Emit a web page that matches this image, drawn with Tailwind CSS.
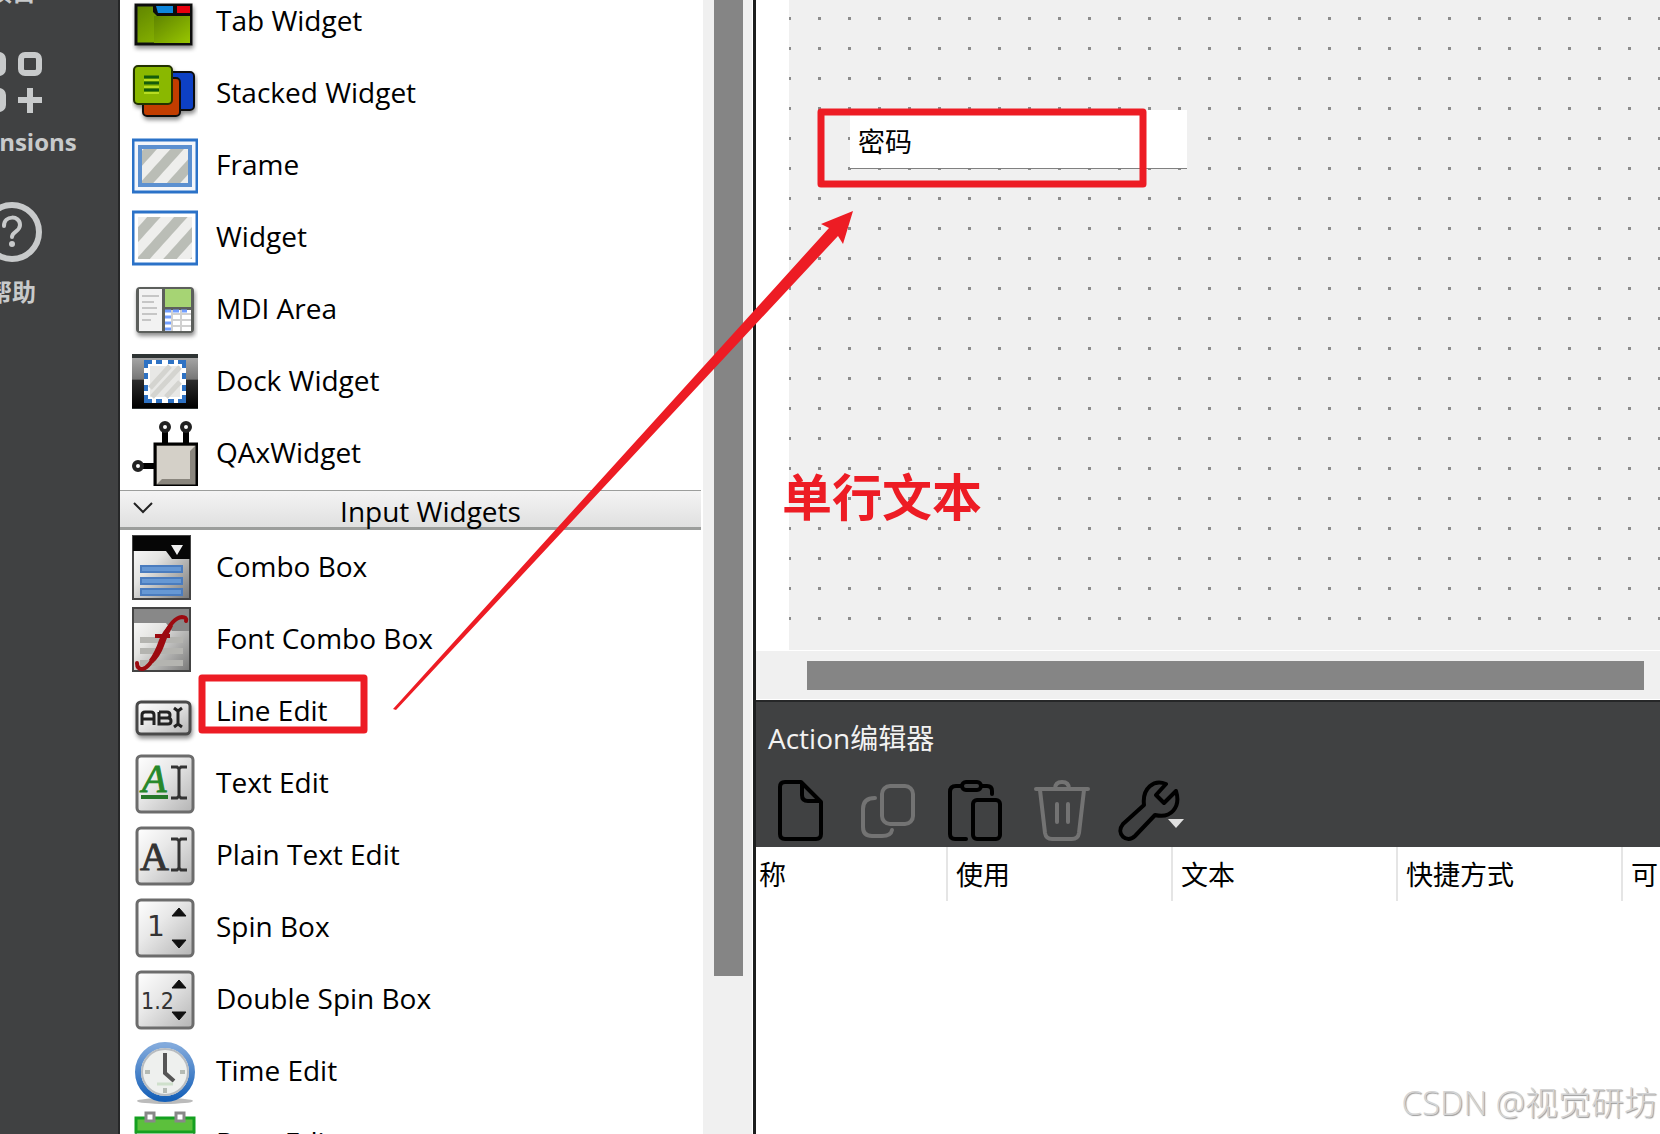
<!DOCTYPE html>
<html lang="zh-CN">
<head>
    <meta charset="UTF-8">
    <meta name="viewport" content="width=device-width, initial-scale=1.0">
    <title>Qt Designer - Line Edit</title>
    <script src="https://cdn.jsdelivr.net/npm/@tailwindcss/browser@4"></script>
</head>
<body class="relative flex h-screen overflow-hidden bg-white font-['Open_Sans','Noto_Sans_CJK_SC',sans-serif] text-[27px] text-black">

    <!-- Shared gradients and patterns for the icons -->
    <svg class="absolute size-0" aria-hidden="true">
        <defs>
            <linearGradient id="key" x1="0" y1="0" x2="1" y2="1"><stop offset="0" stop-color="#fff"/><stop offset="0.4" stop-color="#e9e9e9"/><stop offset="1" stop-color="#b4b4b4"/></linearGradient>
            <linearGradient id="green" x1="0" y1="0" x2="1" y2="1"><stop offset="0" stop-color="#5f8400"/><stop offset="1" stop-color="#98c600"/></linearGradient>
            <linearGradient id="dock" x1="0" y1="0" x2="0" y2="1"><stop offset="0" stop-color="#a5a5a5"/><stop offset="0.42" stop-color="#777"/><stop offset="0.45" stop-color="#2b2b2b"/><stop offset="1" stop-color="#000"/></linearGradient>
            <linearGradient id="grey" x1="0" y1="0" x2="1" y2="1"><stop offset="0" stop-color="#fff"/><stop offset="0.4" stop-color="#e4e4e2"/><stop offset="1" stop-color="#777"/></linearGradient>
            <linearGradient id="ring" x1="0" y1="0" x2="0" y2="1"><stop offset="0" stop-color="#82aadc"/><stop offset="1" stop-color="#1660b8"/></linearGradient>
            <pattern id="stripes" width="20" height="20" patternUnits="userSpaceOnUse" patternTransform="rotate(42)"><rect width="20" height="20" fill="#eeeeec"/><rect width="10" height="20" fill="#babdb6"/></pattern>
            <filter id="soft" x="-20%" y="-20%" width="150%" height="150%"><feDropShadow dx="1" dy="3" stdDeviation="2" flood-opacity="0.45"/></filter>
        </defs>
    </svg>

    <!-- Mode bar -->
    <nav class="w-30 shrink-0 overflow-hidden border-r-2 border-[#262728] bg-[#404142] font-bold text-[#c8cacb]">
        <div class="-ml-[88px] flex w-[200px] flex-col items-center text-[24px] leading-8">
            <a href="#" class="-mt-[24px]">项目</a>
            <a href="#" class="mt-10 flex flex-col items-center">
                <svg class="h-[70px] w-[72px]" viewBox="0 0 72 70" fill="none" stroke="#c8cacb" stroke-width="6">
                    <rect x="9" y="7" width="18" height="18" rx="4"/>
                    <rect x="45" y="7" width="18" height="18" rx="4"/>
                    <rect x="9" y="43" width="18" height="18" rx="4"/>
                    <path d="M54 40v25M42 52h24"/>
                </svg>
                <span class="mt-2">Extensions</span>
            </a>
            <a href="#" class="mt-[42px] flex flex-col items-center">
                <svg class="size-16" viewBox="0 0 64 64" fill="none" stroke="#c8cacb">
                    <circle cx="32" cy="32" r="27" stroke-width="6"/>
                    <path d="M24 26c0-11 16-11 16-1 0 7-8 6-8 12" stroke-width="4" stroke-linecap="round"/>
                    <circle cx="32" cy="44" r="3" fill="#c8cacb" stroke="none"/>
                </svg>
                <span class="mt-3">帮助</span>
            </a>
        </div>
    </nav>

    <!-- Widget box -->
    <aside class="flex w-[636px] shrink-0 overflow-hidden border-r-3 border-[#1c1e1e] text-[28px]">
        <div class="min-w-0 flex-1">
            <ul class="-mt-4 [&_svg]:mt-0.5">
                <li class="flex h-18 items-center gap-[18px] pl-3">
                    <svg class="size-[66px]" viewBox="0 0 66 66"><g filter="url(#soft)"><rect x="4" y="17" width="55" height="39" fill="url(#green)" stroke="#111" stroke-width="3"/><path d="M21 16h39v12H25l-4-4z" fill="#111"/><path d="M22 28h36v27H22z" fill="url(#green)"/><path d="M24 18h17v7H26z" fill="#0e86dc"/><path d="M45 18h13v7H45z" fill="#e8050c"/></g></svg>
                    Tab Widget
                </li>
                <li class="flex h-18 items-center gap-[18px] pl-3">
                    <svg class="size-[66px]" viewBox="0 0 66 66" stroke-width="2"><g filter="url(#soft)"><rect x="26" y="12" width="36" height="38" rx="4" fill="#0b3fc4" stroke="#111"/><rect x="11" y="18" width="37" height="38" rx="4" fill="#c23c06" stroke="#111"/><rect x="2" y="6" width="38" height="38" rx="4" fill="#8ab800" stroke="#243300"/></g><path d="M12 17h15M12 23h15M12 30h15" stroke="#145c0c" stroke-width="3"/><path d="M12 20h15M12 27h15M12 33h15" stroke="#b8dc20"/></svg>
                    Stacked Widget
                </li>
                <li class="flex h-18 items-center gap-[18px] pl-3">
                    <svg class="size-[66px]" viewBox="0 0 66 66"><rect x="1" y="8" width="64" height="52" fill="#f4f6fa" stroke="#2b72c8" stroke-width="3"/><rect x="8" y="15" width="50" height="38" fill="url(#stripes)" stroke="#5c90d0" stroke-width="4"/></svg>
                    Frame
                </li>
                <li class="flex h-18 items-center gap-[18px] pl-3">
                    <svg class="size-[66px]" viewBox="0 0 66 66"><rect x="1" y="8" width="64" height="52" fill="#fff" stroke="#2b72c8" stroke-width="3"/><rect x="6" y="13" width="54" height="42" fill="url(#stripes)"/></svg>
                    Widget
                </li>
                <li class="flex h-18 items-center gap-[18px] pl-3">
                    <svg class="size-[66px]" viewBox="0 0 66 66"><g filter="url(#soft)"><rect x="4" y="11" width="58" height="46" rx="4" fill="#5c5e5c"/></g><rect x="7" y="13" width="23" height="42" fill="#f2f2f2"/><path d="M10 20h17M10 26h12M10 32h15M10 38h15M10 44h9" stroke="#c6c6c6" stroke-width="2"/><rect x="33" y="13" width="26" height="18" fill="#a6d474"/><rect x="33" y="34" width="26" height="21" fill="#fff"/><path d="M33 35h6m2 0h6m2 0h6M33 41h6m-6 6h6m-6 6h6" stroke="#729fff" stroke-width="3"/><path d="M40 34v21M49 34v21M40 38h19M40 44h19M40 50h19" stroke="#d0d0d0" stroke-width="2"/></svg>
                    MDI Area
                </li>
                <li class="flex h-18 items-center gap-[18px] pl-3">
                    <svg class="size-[66px]" viewBox="0 0 66 66"><rect y="6" width="66" height="55" fill="#2e3434"/><rect y="10" width="66" height="50" fill="url(#dock)"/><rect x="12" y="12" width="42" height="43" rx="3" fill="#fff"/><rect x="18" y="18" width="30" height="31" fill="#e8e8e6"/><path d="M18 40l20-22M20 49l28-30M34 49l14-15" stroke="#d4d4d0" stroke-width="5"/><path d="M14 20v-6h6M46 14h6v6M52 47v6h-6M20 53h-6v-6M24 14h6M36 14h6M24 53h6M36 53h6M14 25v6M14 37v6M52 25v6M52 37v6" fill="none" stroke="#2e72c4" stroke-width="4"/></svg>
                    Dock Widget
                </li>
                <li class="flex h-18 items-center gap-[18px] pl-3">
                    <svg class="size-[66px]" viewBox="0 0 66 66"><path d="M33 11v13M54 11v13M10 46h12" stroke="#000" stroke-width="6"/><rect x="23" y="24" width="42" height="42" fill="#8a867e" stroke="#000" stroke-width="3"/><path d="M25 26h38l-5 5v28H30l-5 5z" fill="#d4d0c8"/><g fill="#fff" stroke="#222" stroke-width="4"><circle cx="33" cy="7" r="4"/><circle cx="54" cy="7" r="4"/><circle cx="6" cy="46" r="4"/></g></svg>
                    QAxWidget
                </li>
            </ul>

            <button type="button" class="mt-0.5 flex h-10 w-[581px] items-center border-t border-b-3 border-[#9c9e9c] bg-linear-to-b from-[#f4f4f4] to-[#e0e0e0] pl-3">
                <svg class="h-6 w-6" viewBox="0 0 24 24" fill="none" stroke="#222" stroke-width="2"><path d="M2 6l9 9 9-9"/></svg>
                <span class="flex-1 pt-1 pl-1 text-center">Input Widgets</span>
            </button>

            <ul class="[&_svg]:mt-0.5">
                <li class="flex h-18 items-center gap-[18px] pl-3">
                    <svg class="size-[66px]" viewBox="0 0 66 66"><rect x="1" y="2" width="57" height="63" fill="url(#grey)" stroke="#444" stroke-width="2"/><path d="M1 2h57v23H40l-6-8H1z" fill="#060606"/><path d="M39 11h12l-6 10z" fill="#eee"/><path d="M8 35h43M8 47h43M8 58h43" stroke="#4a7cbe" stroke-width="8"/><path d="M10 35h39M10 47h39M10 58h39" stroke="#6698d4" stroke-width="4"/></svg>
                    Combo Box
                </li>
                <li class="flex h-18 items-center gap-[18px] pl-3">
                    <svg class="size-[66px]" viewBox="0 0 66 66"><rect x="1" y="2" width="57" height="63" fill="url(#grey)" stroke="#444" stroke-width="2"/><path d="M2 3h55v22H40l-6-8H2z" fill="#888"/><path d="M8 34h43M8 45h43M8 57h43" stroke="#b4b4b0" stroke-width="6"/><path d="M5 57q0 6 5 6 6 0 14-15l8-17q8-19 18-20 5 0 4 4" fill="none" stroke="#9c0a10" stroke-width="4" stroke-linecap="round"/><path d="M17 54q6-8 10-20 4-10 11-16l3 2q-6 10-9 20-4 11-11 17z" fill="#9c0a10"/><path d="M23 30h15" stroke="#9c0a10" stroke-width="4"/></svg>
                    Font Combo Box
                </li>
                <li class="flex h-18 items-center gap-[18px] pl-3">
                    <svg class="size-[66px]" viewBox="0 0 66 66"><rect x="5" y="24" width="53" height="32" rx="4" fill="url(#key)" stroke="#484848" stroke-width="3" filter="url(#soft)"/><path d="M10 47V37q0-3 3-3h6q3 0 3 3v10M10 41h12M27 34v12h9q3 0 3-3t-3-3h-9m8 0q3 0 3-3t-3-3h-8" fill="none" stroke="#222" stroke-width="3"/><path d="M42 30l4 3 4-3M46 32v15M42 49l4-3 4 3" fill="none" stroke="#222" stroke-width="3"/></svg>
                    Line Edit
                </li>
                <li class="flex h-18 items-center gap-[18px] pl-3">
                    <svg class="size-[66px]" viewBox="0 0 66 66"><rect x="5" y="6" width="56" height="56" rx="4" fill="url(#key)" stroke="#6c6c6c" stroke-width="3"/><text x="10" y="42" font-family="Liberation Serif" font-style="italic" font-size="40" fill="#26882a" stroke="#26882a">A</text><path d="M9 47h27" stroke="#26782a" stroke-width="4"/><path d="M39 17h6l2 2 2-2h6M47 18v28M39 48h6l2-2 2 2h6" fill="none" stroke="#333" stroke-width="3"/></svg>
                    Text Edit
                </li>
                <li class="flex h-18 items-center gap-[18px] pl-3">
                    <svg class="size-[66px]" viewBox="0 0 66 66"><rect x="5" y="6" width="56" height="56" rx="4" fill="url(#key)" stroke="#6c6c6c" stroke-width="3"/><text x="8" y="48" font-family="Liberation Serif" font-size="40" fill="#333" stroke="#333">A</text><path d="M39 17h6l2 2 2-2h6M47 18v28M39 48h6l2-2 2 2h6" fill="none" stroke="#333" stroke-width="3"/></svg>
                    Plain Text Edit
                </li>
                <li class="flex h-18 items-center gap-[18px] pl-3">
                    <svg class="size-[66px]" viewBox="0 0 66 66"><rect x="5" y="6" width="56" height="56" rx="4" fill="url(#key)" stroke="#6c6c6c" stroke-width="3"/><text x="15" y="42" font-family="DejaVu Sans" font-size="28" fill="#333">1</text><path d="M40 22l7-8 7 8zM40 46l7 8 7-8z" fill="#111" stroke="#111"/></svg>
                    Spin Box
                </li>
                <li class="flex h-18 items-center gap-[18px] pl-3">
                    <svg class="size-[66px]" viewBox="0 0 66 66"><rect x="5" y="6" width="56" height="56" rx="4" fill="url(#key)" stroke="#6c6c6c" stroke-width="3"/><text x="9" y="43" font-family="DejaVu Sans Condensed, DejaVu Sans" font-size="23" fill="#333">1.2</text><path d="M40 22l7-8 7 8zM40 46l7 8 7-8z" fill="#111" stroke="#111"/></svg>
                    Double Spin Box
                </li>
                <li class="flex h-18 items-center gap-[18px] pl-3">
                    <svg class="size-[66px]" viewBox="0 0 66 66"><ellipse cx="33" cy="63" rx="28" ry="3" fill="#bbb"/><circle cx="33" cy="34" r="27" fill="#eef0ee" stroke="url(#ring)" stroke-width="6"/><circle cx="33" cy="34" r="23" fill="none" stroke="#b8bcc0" stroke-width="2"/><path d="M33 15v20l9 8" fill="none" stroke="#555" stroke-width="4"/><path d="M13 34h5M48 34h5M33 50v5" stroke="#b4bab4" stroke-width="4"/><path d="M25 46h16" stroke="#cfe0cc" stroke-width="3"/></svg>
                    Time Edit
                </li>
                <li class="flex h-18 items-center gap-[18px] pl-3">
                    <svg class="size-[66px]" viewBox="0 0 66 66"><rect x="4" y="8" width="58" height="54" fill="#fff" stroke="#888" stroke-width="2"/><rect x="4" y="8" width="58" height="14" fill="#5cc03c" stroke="#15a020" stroke-width="3"/><g fill="#fff" stroke="#888" stroke-width="3"><rect x="14" y="3" width="8" height="8"/><rect x="44" y="3" width="8" height="8"/></g></svg>
                    Date Edit
                </li>
            </ul>
        </div>
        <div class="w-[50px] shrink-0 border-r border-white bg-[#f0f0f0] pl-[11px]">
            <div class="h-[976px] w-[29px] bg-[#858585]"></div>
        </div>
    </aside>

    <main class="flex min-w-0 flex-1 flex-col">
        <!-- Form canvas -->
        <section class="relative ml-[33px] min-h-0 flex-1 bg-[#f0f0f0]">
            <svg class="absolute top-0 left-0 h-[calc(100%-4px)] w-full" aria-hidden="true">
                <defs><pattern id="grid" x="-1" y="17" width="30" height="30" patternUnits="userSpaceOnUse"><rect width="3" height="3" fill="#8c8c8c"/></pattern></defs>
                <rect width="100%" height="100%" fill="url(#grid)"/>
            </svg>
            <input type="text" value="密码" aria-label="密码" class="absolute top-[110px] left-[61px] h-[59px] w-[337px] border-b border-[#808080] bg-white pt-0.5 pl-2 outline-none">
        </section>
        <div class="h-[50px] shrink-0 border-y border-t-white border-b-white bg-[#f0f0f0] pt-[10px] pr-4 pl-[51px]">
            <div class="h-[29px] bg-[#858585]"></div>
        </div>

        <!-- Action editor -->
        <section class="h-[434px] shrink-0">
            <header class="h-[147px] border-t-2 border-[#262728] bg-[#404142] pl-3">
                <h2 class="pt-4 text-[28px] leading-10 text-[#f2f2f2]">Action编辑器</h2>
                <div class="mt-5 flex items-center gap-[23px]">
                    <button type="button" aria-label="新建" class="w-16">
                        <svg class="size-16" viewBox="0 0 64 64" fill="none" stroke="#000" stroke-width="4" stroke-linejoin="round"><path d="M17 4h16l20 20v32q0 5-5 5H17q-5 0-5-5V9q0-5 5-5zM34 5v12q0 6 6 6h12"/></svg>
                    </button>
                    <button type="button" aria-label="复制" class="w-16" disabled>
                        <svg class="size-16" viewBox="0 0 64 64" fill="none" stroke="#737373" stroke-width="4" stroke-linecap="round"><rect x="27" y="8" width="31" height="38" rx="8"/><path d="M20 20q-12 0-12 11v18q0 9 9 9h10q9 0 10-6"/></svg>
                    </button>
                    <button type="button" aria-label="粘贴" class="w-16">
                        <svg class="size-16" viewBox="0 0 64 64" fill="none" stroke="#000" stroke-width="4" stroke-linecap="round"><path d="M19 8h-5q-6 0-6 6v42q0 5 5 5h11M40 8h5q5 0 5 5v3"/><rect x="20" y="4" width="19" height="8" rx="4"/><rect x="31" y="22" width="27" height="39" rx="4"/></svg>
                    </button>
                    <button type="button" aria-label="删除" class="w-16" disabled>
                        <svg class="size-16" viewBox="0 0 64 64" fill="none" stroke="#737373" stroke-width="4" stroke-linecap="round"><path d="M7 11h52M11 12l5 43q1 6 7 6h20q6 0 7-6l5-43M26 11q0-7 7-7t7 7M28 26v18M39 26v18"/></svg>
                    </button>
                    <button type="button" aria-label="配置" class="w-18">
                        <svg class="h-16 w-18" viewBox="0 0 72 64" fill="none" stroke="#000" stroke-width="4" stroke-linejoin="round"><path d="M50 6C38 1 26 10 28 27L7 46c-8 10 4 20 12 12l20-21c16 4 26-8 21-24L48 25l-8-8z"/><path d="M52 41h16l-8 9z" fill="#e0e0e0" stroke="none"/></svg>
                    </button>
                </div>
            </header>
            <table class="w-full table-fixed">
                <thead>
                    <tr class="h-[54px] text-left">
                        <th class="w-[191px] overflow-hidden border-r-2 border-[#e5e5e5] pt-[3px] pl-[3px] font-normal">称</th>
                        <th class="w-[225px] border-r-2 border-[#e5e5e5] pt-[3px] pl-2 font-normal">使用</th>
                        <th class="w-[225px] border-r-2 border-[#e5e5e5] pt-[3px] pl-2 font-normal">文本</th>
                        <th class="w-[225px] border-r-2 border-[#e5e5e5] pt-[3px] pl-2 font-normal">快捷方式</th>
                        <th class="overflow-hidden pt-[3px] pl-2 font-normal">可</th>
                    </tr>
                </thead>
            </table>
        </section>
    </main>

    <!-- Annotations -->
    <svg class="pointer-events-none absolute inset-0 size-full" fill="none" stroke="#ed1c24" stroke-width="7" stroke-linejoin="round">
        <rect x="202" y="678" width="162" height="52"/>
        <rect x="821" y="112" width="322" height="72"/>
        <path d="M853 211L821 224l8 4L393 709l3 1L838 236l5 8z" fill="#ed1c24" stroke="none"/>
    </svg>
    <p class="absolute top-[468px] left-[782px] text-[50px] leading-[58px] font-bold text-[#ed1c24]">单行文本</p>
    <p class="absolute right-[3px] bottom-[7px] text-[33px] leading-12 font-light text-[#d4d4d4] [text-shadow:1px_1px_1px_#999]">CSDN @视觉研坊</p>
</body>
</html>
